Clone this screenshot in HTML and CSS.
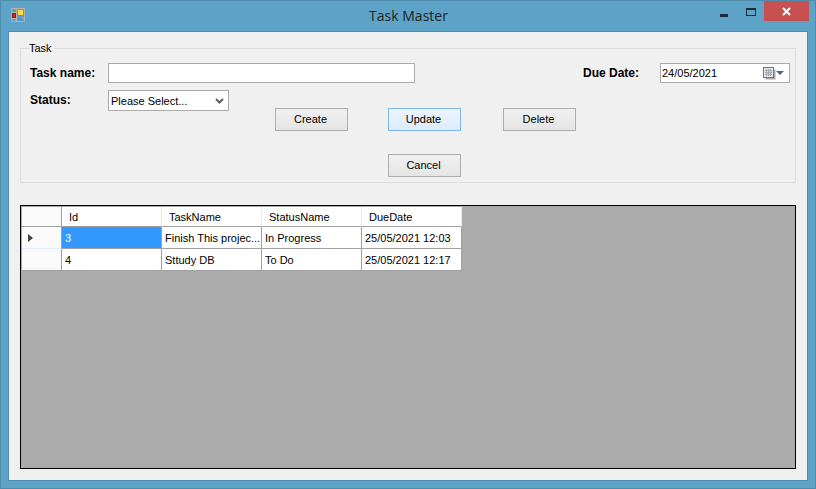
FILE: index.html
```html
<!DOCTYPE html>
<html lang="en">
<head>
	<meta charset="UTF-8">
	<title>Task Master</title>
	<link rel="stylesheet" href="styles.css">
</head>
<body>
	<div class="window">
		<div class="titlebar">
			<svg class="appicon" width="14" height="14" viewBox="0 0 14 14">
				<path d="M0.500 0.500H13.500V13.500H0.500ZM0.500 4.500H5.500M5.500 0.500V13.500M5.500 10.500H13.500M0.500 10.500H5.500" fill="none" stroke="#b4b4a8"/>
				<rect x="6.500" y="1.500" width="6" height="6" fill="#f7d84a" stroke="#b98a18"/>
				<rect x="1.500" y="5.500" width="3" height="4" fill="#d0281c" stroke="#8c2018"/>
				<rect x="6.500" y="10" width="5" height="3" fill="#5c8ce0"/>
			</svg>
			<div class="title">Task Master</div>
			<div class="controls">
				<span class="min"></span>
				<span class="max"></span>
				<span class="close">
					<svg width="9" height="9" viewBox="0 0 9 9"><path d="M1 1L8 8M8 1L1 8" stroke="#fff" stroke-width="2"/></svg>
				</span>
			</div>
		</div>
		<div class="client">
			<fieldset class="group">
				<legend>Task</legend>
				<div class="row">
					<label class="lbl">Task name:</label>
					<input class="name" type="text">
					<label class="lbl due">Due Date:</label>
					<div class="date">
						<span>24/05/2021</span>
						<svg width="26" height="14" viewBox="0 0 26 14">
							<rect x="2.500" y="3.500" width="10" height="10" fill="#a9a9a9"/>
							<rect x="0.500" y="1.500" width="10" height="10" fill="#e4e4e8" stroke="#74747c"/>
							<path d="M2 4.500H9M2 6.500H9M2 8.500H9M3.500 3V10M5.500 3V10M7.500 3V10" stroke="#a8a8b0"/>
							<path d="M13 5H21L17 9Z" fill="#4c6185"/>
						</svg>
					</div>
				</div>
				<div class="row lower">
					<label class="lbl">Status:</label>
					<div class="select">
						<span>Please Select...</span>
						<svg width="9" height="6" viewBox="0 0 9 6"><path d="M1 1L4.500 4.500L8 1" fill="none" stroke="#606060" stroke-width="2"/></svg>
					</div>
					<div class="actions">
						<button>Create</button>
						<button class="focus">Update</button>
						<button>Delete</button>
						<button class="cancel">Cancel</button>
					</div>
				</div>
			</fieldset>
			<div class="gridview">
				<table>
					<thead>
						<tr>
							<th class="rowhead"></th>
							<th>Id</th>
							<th>TaskName</th>
							<th>StatusName</th>
							<th>DueDate</th>
						</tr>
					</thead>
					<tbody>
						<tr>
							<td class="rowhead"><i class="arrow"></i></td>
							<td class="selected">3</td>
							<td>Finish This projec...</td>
							<td>In Progress</td>
							<td>25/05/2021 12:03</td>
						</tr>
						<tr>
							<td class="rowhead"></td>
							<td>4</td>
							<td>Sttudy DB</td>
							<td>To Do</td>
							<td>25/05/2021 12:17</td>
						</tr>
					</tbody>
				</table>
			</div>
		</div>
	</div>
</body>
</html>
```

FILE: styles.css
```css
*{
	margin: 0;
	padding: 0;
	box-sizing: border-box;
}
body{
	width: 816px;
	height: 489px;
	overflow: hidden;
	font-family: "Liberation Sans", Arial, sans-serif;
	font-size: 11px;
	color: #000;
}
.window{
	width: 816px;
	height: 489px;
	background-color: #5ca3c7;
	border: 1px solid #4f8cab;
	padding: 0 7px 7px 7px;
	display: flex;
	flex-direction: column;
}
.titlebar{
	height: 30px;
	display: flex;
	flex: none;
	position: relative;
}
.appicon{
	margin: 7px 0 0 3px;
}
.title{
	flex: 1;
	text-align: center;
	font-family: "Open Sans", sans-serif;
	font-size: 14px;
	line-height: 30px;
	color: #222;
	padding-right: 16px;
}
.controls{
	position: absolute;
	top: 0;
	right: -1px;
	display: flex;
}
.min{
	width: 8px;
	height: 3px;
	background-color: #1d2c36;
	margin: 13px 18px 0 0;
}
.max{
	width: 10px;
	height: 8px;
	border: 1px solid #1d2c36;
	border-top-width: 2px;
	margin: 7px 8px 0 0;
}
.close{
	width: 45px;
	height: 20px;
	background-color: #c75050;
	display: flex;
	align-items: center;
	justify-content: center;
}
.client{
	flex: 1;
	background-color: #f0f0f0;
	border: 1px solid #4f8cab;
	padding: 10px 11px 11px 11px;
	display: flex;
	flex-direction: column;
}
.group{
	height: 141px;
	border: 1px solid #dcdcdc;
	padding: 8px 0 0 9px;
	flex: none;
}
.group legend{
	margin-left: -1px;
	padding: 0 2px 0 0;
	line-height: 13px;
	color: #000;
}
.row{
	display: flex;
	align-items: flex-start;
}
.lbl{
	width: 78px;
	font-size: 12px;
	font-weight: bold;
	line-height: 20px;
}
.name{
	width: 307px;
	height: 20px;
	background-color: #fff;
	border: 1px solid #ababab;
	outline: none;
}
.due{
	width: 77px;
	margin-left: 168px;
}
.date{
	width: 130px;
	height: 20px;
	background-color: #fff;
	border: 1px solid #ababab;
	display: flex;
	align-items: center;
	justify-content: space-between;
	padding: 0 0 0 1px;
}
.lower{
	margin-top: 7px;
}
.select{
	width: 121px;
	height: 21px;
	background-color: #fff;
	border: 1px solid #ababab;
	display: flex;
	align-items: center;
	justify-content: space-between;
	padding: 0 4px 0 2px;
}
.actions{
	display: grid;
	grid-template-columns: 113px 115px 73px;
	row-gap: 23px;
	margin: 18px 0 0 46px;
}
button{
	width: 73px;
	height: 23px;
	border: 1px solid #adadad;
	background: linear-gradient(#f0f0f0, #e5e5e5);
	font-family: "Liberation Sans", Arial, sans-serif;
	font-size: 11px;
	color: #000;
	padding: 0 2px 2px 0;
}
.focus{
	border-color: #7eb4ea;
	background: linear-gradient(#ecf4fc, #dcecfc);
}
.cancel{
	grid-column: 2;
}
.gridview{
	height: 264px;
	margin-top: 22px;
	background-color: #ababab;
	border: 1px solid #000;
	flex: none;
}
table{
	border-collapse: separate;
	border-spacing: 0;
	table-layout: fixed;
	width: 440px;
	margin: 1px 0 0 1px;
}
th{
	height: 20px;
	background-color: #fff;
	border-right: 1px solid #e3ecf6;
	border-bottom: 1px solid #a0a0a0;
	font-weight: normal;
	text-align: left;
	padding-left: 7px;
}
td{
	height: 22px;
	background-color: #fff;
	border-right: 1px solid #a0a0a0;
	border-bottom: 1px solid #a0a0a0;
	padding-left: 3px;
	white-space: nowrap;
	overflow: hidden;
}
th.rowhead, td.rowhead{
	width: 40px;
	padding: 0;
	background-color: #fafafa;
	border-right: 1px solid #a0a0a0;
}
td.rowhead{
	border-bottom-color: #e3ecf6;
	padding-left: 6px;
}
tr:last-child td.rowhead{
	border-bottom-color: #a0a0a0;
}
.selected{
	background-color: #3399ff;
	color: #fff;
}
.arrow{
	display: block;
	width: 0;
	height: 0;
	border-left: 5px solid #404040;
	border-top: 4.500px solid transparent;
	border-bottom: 4.500px solid transparent;
}
```
